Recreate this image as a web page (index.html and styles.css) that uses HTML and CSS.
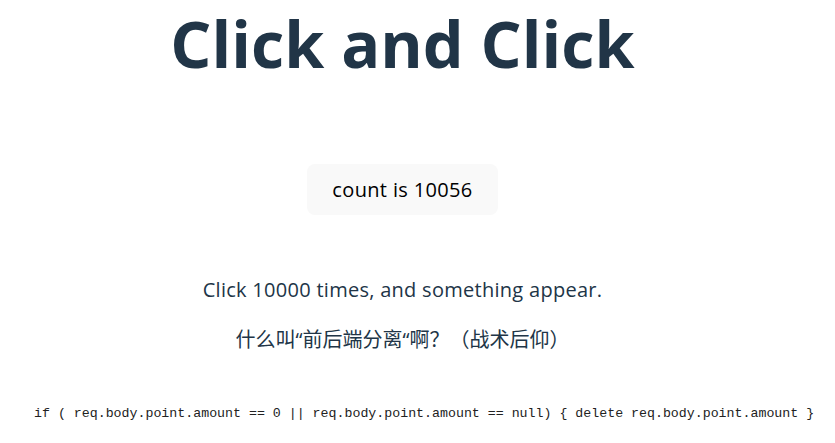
FILE: index.html
```html
<!DOCTYPE html>
<html lang="zh">
<head>
<meta charset="utf-8">
<title>Click and Click</title>
<link rel="stylesheet" href="styles.css">
</head>
<body>
<div class="app">
  <h1 class="title">Click and Click</h1>
  <div class="card">
    <button class="counter" type="button">count is 10056</button>
  </div>
  <p class="hint">Click 10000 times, and something appear.</p>
  <p class="joke">什么叫“前后端分离“啊？（战术后仰）</p>
  <code class="snippet">if ( req.body.point.amount == 0 || req.body.point.amount == null) { delete req.body.point.amount }</code>
</div>
</body>
</html>
```
FILE: styles.css
```css
html, body {
  margin: 0;
  padding: 0;
  background: #ffffff;
}
body {
  font-family: "Open Sans", "Noto Sans CJK SC", sans-serif;
  font-size: 20px;
  color: #213547;
}
.app {
  display: flex;
  flex-direction: column;
  align-items: center;
  text-align: center;
  padding-right: 30px;
}
.title {
  margin: 0;
  padding-top: 8px;
  font-size: 64.7px;
  line-height: 70px;
  font-weight: 700;
  color: #213547;
}
.card {
  margin-top: 86px;
}
.counter {
  font-family: "Open Sans", "Noto Sans CJK SC", sans-serif;
  font-size: 20px;
  letter-spacing: 0.35px;
  line-height: 25px;
  padding: 12px 24px;
  border: 1px solid transparent;
  border-radius: 8px;
  background: #f9f9f9;
  color: #000000;
  cursor: pointer;
}
.hint {
  margin: 62px 0 0;
  line-height: 26px;
  letter-spacing: 0.28px;
}
.joke {
  margin: 24px 0 0;
  line-height: 26px;
  font-family: "Open Sans", "Noto Sans CJK SC", sans-serif;
}
.snippet {
  align-self: flex-start;
  margin: 53px 0 0 34px;
  font-family: "Liberation Mono", monospace;
  font-size: 13.28px;
  color: #222222;
  white-space: pre;
}
```
